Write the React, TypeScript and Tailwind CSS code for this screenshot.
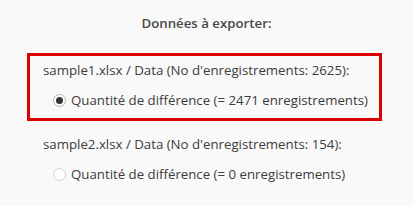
import React, { useState } from 'react';

interface SourceEntry {
  file: string;
  sheet: string;
  total: number;
  diff: number;
}

const sources: SourceEntry[] = [
  { file: 'sample1.xlsx', sheet: 'Data', total: 2625, diff: 2471 },
  { file: 'sample2.xlsx', sheet: 'Data', total: 154, diff: 0 },
];

const Radio: React.FC<{ checked: boolean }> = ({ checked }) => (
  <span
    className={
      checked
        ? 'flex shrink-0 items-center justify-center w-[13px] h-[13px] rounded-full border border-[#b5b5b5] bg-white'
        : 'flex shrink-0 items-center justify-center w-[13px] h-[13px] rounded-full border border-[#cfcfcf] bg-white'
    }
  >
    {checked && <span className="w-[7px] h-[7px] rounded-full bg-[#333333]" />}
  </span>
);

const App: React.FC = () => {
  const [selected] = useState(0);

  return (
    <div
      className="w-[413px] h-[206px] bg-[#f9f9f9] text-[13.25px] text-[#3c3c3c] overflow-hidden"
      style={{ fontFamily: '"Open Sans", "Noto Sans", sans-serif' }}
    >
      <div className="pt-[13px] h-[20px] leading-[20px] box-content text-center font-semibold text-[#484848]">
        Données à exporter:
      </div>
      <div className="px-[27px] pt-[20px]">
        {sources.map((s, i) => (
          <div
            key={s.file}
            className={
              i === selected
                ? 'border-[3px] border-[#dd0000] pl-[13px] pt-[4px] pb-[8px] w-[355px]'
                : 'border-[3px] border-transparent pl-[13px] pt-[10px] pb-[8px] w-[355px]'
            }
          >
            <div className="leading-[20px] whitespace-nowrap">
              {s.file} / {s.sheet} (No d'enregistrements: {s.total}):
            </div>
            <div className="flex items-center gap-[5px] pl-[10px] mt-[10px] leading-[20px] whitespace-nowrap">
              <Radio checked={i === selected} />
              <span>Quantité de différence (= {s.diff} enregistrements)</span>
            </div>
          </div>
        ))}
      </div>
    </div>
  );
};

export default App;
